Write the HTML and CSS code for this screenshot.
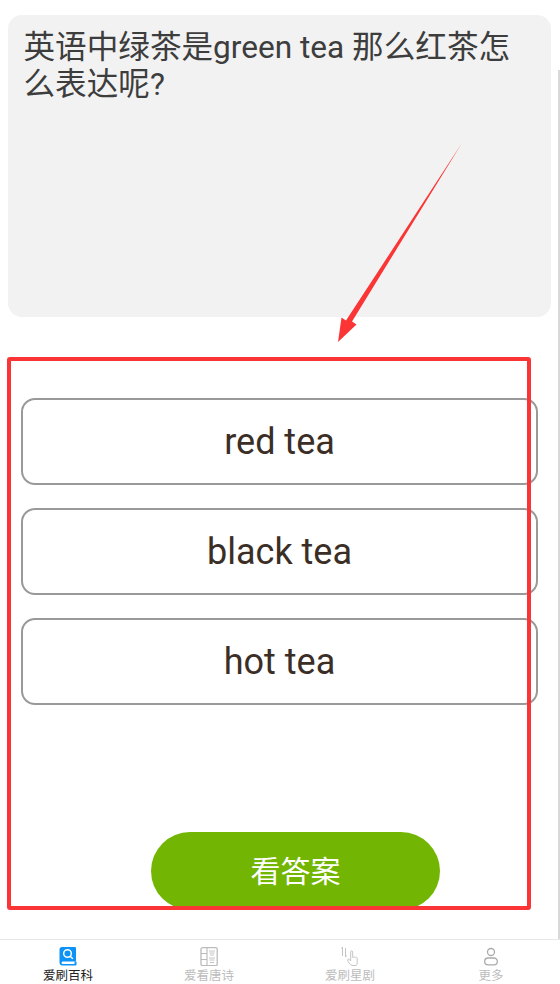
FILE: index.html
```html
<!DOCTYPE html>
<html lang="zh">
<head>
<meta charset="utf-8">
<title>爱刷百科</title>
<link rel="stylesheet" href="styles.css">
</head>
<body>
<div class="page">
  <main class="content">
    <section class="question">英语中绿茶是green tea 那么红茶怎么表达呢?</section>
    <section class="options">
      <div class="option">red tea</div>
      <div class="option">black tea</div>
      <div class="option">hot tea</div>
    </section>
    <div class="answer-row"><button class="answer">看答案</button></div>
  </main>
  <nav class="tabs">
    <div class="tab active">
      <svg class="icon" viewBox="0 0 18 19"><path d="M3 0h13a1 1 0 0 1 1 1v13.500H4c-2 0-2 2.500 0 2.500h13.500v.5a1 1 0 0 1-1 1H3.500A3 3 0 0 1 .5 16V2.500A2.500 2.500 0 0 1 3 0z" fill="#0d93f5"/><path d="M15.500 14.500H17.500V17H15.500z" fill="#0d93f5"/><circle cx="8.500" cy="6.500" r="3.800" fill="none" stroke="#fff" stroke-width="1.500"/><path d="M11.200 9.200l2.600 2.600" stroke="#fff" stroke-width="1.500" fill="none"/></svg>
      <span>爱刷百科</span>
    </div>
    <div class="tab">
      <svg class="icon" viewBox="0 0 18 19"><rect x="1" y="0.700" width="16.200" height="18" rx="1.500" fill="none" stroke="#bbb" stroke-width="1.300"/><path d="M7 1v17.500M1 6.500h6M1 12.500h6" stroke="#bbb" stroke-width="1.100" fill="none"/><path d="M9 4h6M9.500 6h5M10 8h4M9 11h6M9.500 13h5M10 15.500h4" stroke="#c4c4c4" stroke-width="1" fill="none"/></svg>
      <span>爱看唐诗</span>
    </div>
    <div class="tab">
      <svg class="icon" viewBox="0 0 18 19"><path d="M1.500 0v9M0.500 1.500L1.500 0M4.500 1v9l1-1.500" stroke="#c4c4c4" stroke-width="1" fill="none"/><path d="M11 18.500c-2-1-4-3.500-4.300-5.500-.2-1 1.300-1.200 2-.2l1 1.200V5c0-1.500 2-1.500 2 0v5.500c1-.6 2-.6 2.500 0 .8-.4 1.800-.3 2 .5V16c0 1-.5 2-1 2.500z" fill="#fff" stroke="#c4c4c4" stroke-width="1"/></svg>
      <span>爱刷星剧</span>
    </div>
    <div class="tab">
      <svg class="icon" viewBox="0 0 18 19"><circle cx="9" cy="5" r="3.500" fill="none" stroke="#aaa" stroke-width="1.300"/><rect x="2.700" y="11" width="12.600" height="6.800" rx="3.400" fill="none" stroke="#aaa" stroke-width="1.300"/></svg>
      <span>更多</span>
    </div>
  </nav>
  <div class="scrollbar"></div>
  <div class="red-box"></div>
  <svg class="arrow" viewBox="0 0 560 984"><path d="M462 143L352 321.500 356.500 324.500 338 342 341.500 317.500 346 320.500z" fill="#fb3535"/></svg>
</div>
</body>
</html>
```
FILE: styles.css
```css
* { box-sizing: border-box; }
html, body { margin: 0; padding: 0; }
body { background: #fff; font-family: Roboto, "Noto Sans CJK SC", sans-serif; }
.page { position: relative; width: 560px; height: 984px; overflow: hidden; display: flex; flex-direction: column; }
.content { flex: 1; display: flex; flex-direction: column; padding: 15px 9px 0 8px; }
.question { height: 302px; background: #f2f2f2; border-radius: 14px; padding: 14px 15.5px; font-size: 31.6px; line-height: 37px; color: #3d3d3d; }
.options { display: flex; flex-direction: column; gap: 23px; margin-top: 81px; padding-left: 13px; padding-right: 13px; width: 543px; }
.option { height: 87px; border: 2px solid #999; border-radius: 14px; display: flex; align-items: center; justify-content: center; font-size: 36px; color: #3b2e26; }
.answer-row { display: flex; margin-top: 127px; padding-left: 143px; }
.answer { width: 289px; height: 78px; border: 0; border-radius: 39px; background: #72b603; color: #fff; font-family: inherit; font-size: 30px; padding: 0 0 4px; }
.tabs { width: 564px; margin-left: -2.5px; height: 45px; border-top: 1px solid #e8e8e8; display: grid; grid-template-columns: repeat(4, 1fr); }
.tab { display: flex; flex-direction: column; align-items: center; padding-top: 7px; font-size: 12.5px; line-height: 18px; color: #bcbcbc; }
.tab.active { color: #222; }
.icon { width: 18px; height: 19px; display: block; margin-bottom: 1px; }
.scrollbar { position: absolute; left: 558px; top: 70px; width: 2px; height: 869px; background: #d9d9d9; }
.red-box { position: absolute; left: 7px; top: 357px; width: 524px; height: 553px; border: 4px solid #fb3535; border-radius: 3px; }
.arrow { position: absolute; left: 0; top: 0; width: 560px; height: 984px; pointer-events: none; }
```
